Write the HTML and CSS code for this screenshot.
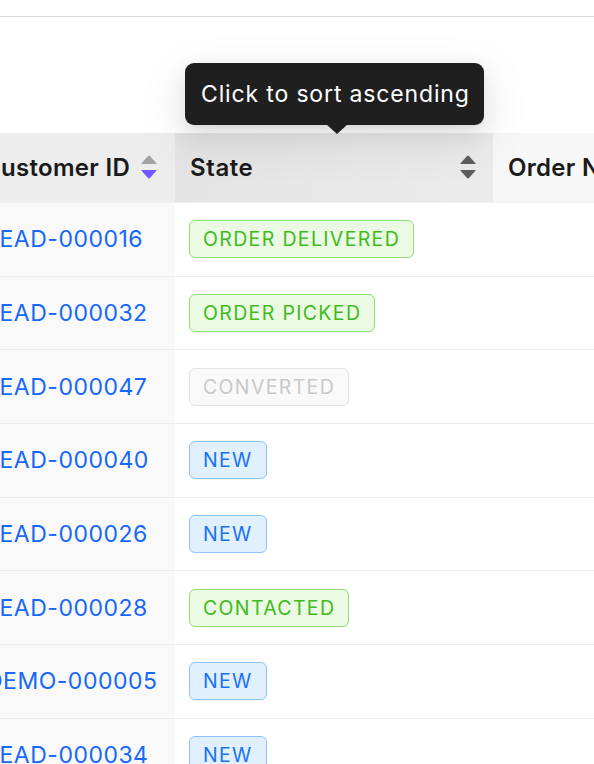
FILE: index.html
```html
<!DOCTYPE html>
<html>
<head>
<meta charset="utf-8">
<link rel="stylesheet" href="styles.css">
</head>
<body>
<div class="topbar"></div>
<div class="gap">
  <div class="tooltip">Click to sort ascending</div>
</div>
<div class="table-wrap">
  <table class="grid">
    <colgroup>
      <col class="c1"><col class="c2"><col class="c3">
    </colgroup>
    <thead>
      <tr>
        <th class="th sorted"><div class="thin"><span>Customer ID</span>
          <svg class="sorter" width="16" height="25" viewBox="0 0 16 25"><path class="up" d="M8 0.5 Q8.6 0.5 9.2 1.2 L15.4 8.2 Q16 9 15 9 L1 9 Q0 9 0.6 8.2 L6.8 1.2 Q7.4 0.5 8 0.5Z"/><path class="down active" d="M1 15 L15 15 Q16 15 15.4 15.8 L9.2 22.8 Q8.6 23.5 8 23.5 Q7.4 23.5 6.8 22.8 L0.6 15.8 Q0 15 1 15Z"/></svg></div></th>
        <th class="th hover"><div class="thin"><span>State</span>
          <svg class="sorter" width="16" height="25" viewBox="0 0 16 25"><path class="up dark" d="M8 0.5 Q8.6 0.5 9.2 1.2 L15.4 8.2 Q16 9 15 9 L1 9 Q0 9 0.6 8.2 L6.8 1.2 Q7.4 0.5 8 0.5Z"/><path class="down dark" d="M1 15 L15 15 Q16 15 15.4 15.8 L9.2 22.8 Q8.6 23.5 8 23.5 Q7.4 23.5 6.8 22.8 L0.6 15.8 Q0 15 1 15Z"/></svg></div></th>
        <th class="th plain"><div class="thin"><span>Order Number</span></div></th>
      </tr>
    </thead>
    <tbody>
      <tr><td class="sortcol"><a class="link">LEAD-000016</a></td><td><span class="tag green">ORDER DELIVERED</span></td><td></td></tr>
      <tr><td class="sortcol"><a class="link">LEAD-000032</a></td><td><span class="tag green">ORDER PICKED</span></td><td></td></tr>
      <tr><td class="sortcol"><a class="link">LEAD-000047</a></td><td><span class="tag grey">CONVERTED</span></td><td></td></tr>
      <tr><td class="sortcol"><a class="link">LEAD-000040</a></td><td><span class="tag blue">NEW</span></td><td></td></tr>
      <tr><td class="sortcol"><a class="link">LEAD-000026</a></td><td><span class="tag blue">NEW</span></td><td></td></tr>
      <tr><td class="sortcol"><a class="link">LEAD-000028</a></td><td><span class="tag green">CONTACTED</span></td><td></td></tr>
      <tr><td class="sortcol"><a class="link">DEMO-000005</a></td><td><span class="tag blue">NEW</span></td><td></td></tr>
      <tr><td class="sortcol"><a class="link">LEAD-000034</a></td><td><span class="tag blue">NEW</span></td><td></td></tr>
    </tbody>
  </table>
</div>
</body>
</html>
```

FILE: styles.css
```css
html, body {
  margin: 0;
  padding: 0;
  background: #ffffff;
  font-family: Inter, "Noto Sans", sans-serif;
  overflow: hidden;
  width: 594px;
  height: 764px;
}

.topbar {
  height: 16px;
  border-bottom: 1px solid #d9d9d9;
}

.gap {
  position: relative;
  height: 116px;
}

.tooltip {
  position: absolute;
  left: 185px;
  top: 46px;
  width: 299px;
  height: 62px;
  box-sizing: border-box;
  padding: 0 16px;
  display: flex;
  align-items: center;
  background: #1f1f1f;
  color: #ffffff;
  border-radius: 9px;
  font-size: 23px;
  letter-spacing: 0.85px;
  white-space: nowrap;
  z-index: 5;
  box-shadow: 0 9px 24px 0 rgba(0,0,0,0.08), 0 5px 9px -6px rgba(0,0,0,0.12), 0 14px 42px 12px rgba(0,0,0,0.05);
}

.tooltip::after {
  content: "";
  position: absolute;
  left: 141px;
  top: 61px;
  width: 0;
  height: 0;
  border-left: 11px solid transparent;
  border-right: 11px solid transparent;
  border-top: 10px solid #1f1f1f;
}

.table-wrap {
  overflow: hidden;
  width: 594px;
}

.grid {
  margin-left: -32px;
  border-collapse: collapse;
  table-layout: fixed;
  width: 826px;
}

.c1 { width: 207px; }
.c2 { width: 318px; }
.c3 { width: 301px; }

.th {
  height: 69px;
  padding: 0 17px 0 15px;
  text-align: left;
  font-weight: 600;
  font-size: 24px;
  letter-spacing: 0.3px;
  color: #1a1a1a;
  border-bottom: 1px solid #f0f0f0;
  white-space: nowrap;
}

.th.sorted { background: #ededed; padding-left: 15px; padding-right: 18px; }
.th.hover { background: linear-gradient(90deg, #e4e4e4 0%, #e8e8e8 60%, #ebebeb 100%); letter-spacing: 0.6px; }
.th.plain { background: #f7f7f7; }

.thin {
  display: flex;
  align-items: center;
  justify-content: space-between;
}

.sorter { display: block; flex: none; }
.sorter .up, .sorter .down { fill: #a3a3a3; }
.sorter .active { fill: #7357ff; }
.sorter .dark { fill: #5e5e5e; }

tbody td {
  height: 72.7px;
  padding: 0 14px;
  border-bottom: 1px solid #ececec;
  font-size: 23px;
  white-space: nowrap;
}

.sortcol {
  background: #f9f9f9;
  padding-left: 18px;
}

.link {
  color: #1668fa;
  text-decoration: none;
  letter-spacing: 0.5px;
}

.tag {
  display: inline-block;
  box-sizing: border-box;
  height: 38px;
  line-height: 36px;
  padding: 0 13px;
  border-radius: 6px;
  border: 1px solid;
  font-size: 19.5px;
  letter-spacing: 1.35px;
}

.tag.green { background: #ebfae2; border-color: #93dd74; color: #3fbb1d; }
.tag.blue { background: #e0f0ff; border-color: #8ec2ff; color: #1a73f2; }
.tag.grey { background: #f9f9f9; border-color: #e3e3e3; color: #c9c9c9; }
```
